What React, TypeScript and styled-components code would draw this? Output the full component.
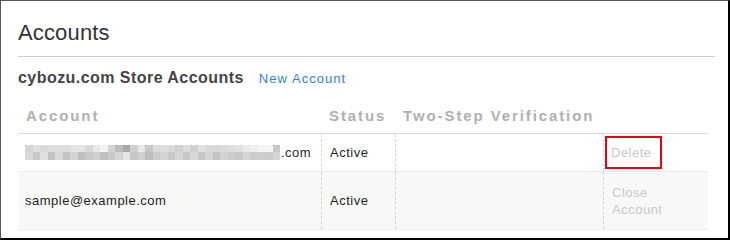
import React from "react";
import styled, { createGlobalStyle } from "styled-components";

const Global = createGlobalStyle`
  html, body { margin: 0; padding: 0; background: #fff; }
  body { font-family: "Liberation Sans", Arial, Helvetica, sans-serif; }
`;

const Frame = styled.div`
  box-sizing: border-box;
  width: 730px;
  height: 240px;
  border-top: 1px solid #555;
  border-left: 1px solid #555;
  border-right: 2px solid #000;
  border-bottom: 2px solid #000;
  padding: 19px 13px 0 17px;
  overflow: hidden;
  background: #fff;
`;

const Title = styled.h1`
  margin: 0;
  font-size: 22px;
  line-height: 26px;
  font-weight: normal;
  letter-spacing: 0.15px;
  color: #333;
`;

const Rule = styled.hr`
  margin: 10px 0 0;
  border: 0;
  height: 1px;
  background: #cfcfcf;
`;

const SectionHead = styled.div`
  display: flex;
  align-items: baseline;
  gap: 15px;
  margin-top: 11px;
`;

const SectionTitle = styled.h2`
  margin: 0;
  font-size: 16px;
  line-height: 20px;
  font-weight: bold;
  letter-spacing: 0.45px;
  color: #444;
`;

const LinkText = styled.a`
  font-size: 13px;
  letter-spacing: 1.05px;
  color: #3083d6;
  text-decoration: none;
`;

const Table = styled.div`
  width: 690px;
  margin-top: 13px;
`;

const Row = styled.div<{ $head?: boolean; $alt?: boolean; $h?: number }>`
  display: grid;
  grid-template-columns: 303px 74px 208px 105px;
  background: ${(p) => (p.$alt ? "#f8f8f6" : "#fff")};
  border-bottom: 1px solid ${(p) => (p.$head ? "#dcdcdc" : "#ebebeb")};
  min-height: ${(p) => p.$h ?? 0}px;
`;

const HeadCell = styled.div`
  padding: 6px 8px 8px;
  font-size: 15px;
  line-height: 18px;
  font-weight: bold;
  letter-spacing: 1.9px;
  color: #b0b0b0;
  white-space: nowrap;
`;

const Cell = styled.div<{ $first?: boolean }>`
  display: flex;
  align-items: center;
  padding: 0 8px 0 ${(p) => (p.$first ? 7 : 8)}px;
  border-left: ${(p) => (p.$first ? "0" : "1px dashed #d6d6d6")};
  font-size: 13px;
  line-height: 17px;
  letter-spacing: 0.5px;
  color: #1e1e1e;
`;

const ActionCell = styled(Cell)`
  padding-right: 30px;
`;

const ActionText = styled.span`
  color: #c8c8c8;
  letter-spacing: 0.5px;
`;

const Highlight = styled.span`
  display: inline-block;
  margin-left: -7px;
  padding: 6px 8px 6px 4px;
  border: 2px solid #e60012;
  color: #c8c8c8;
`;

const Mosaic = styled.div`
  display: grid;
  grid-template-columns: repeat(34, 7.5px);
  grid-template-rows: 7px 8px;
  margin: 0 1px 0 0;
`;

const Pixel = styled.span<{ $g: number }>`
  display: block;
  background: rgb(${(p) => `${p.$g},${p.$g},${p.$g}`});
`;

const top = [212, 224, 216, 221, 221, 221, 228, 228, 216, 232, 242, 212, 189, 168, 208, 232, 200, 220, 221, 216, 208, 221, 208, 224, 216, 216, 218, 221, 226, 236, 240, 244, 246, 200];
const bottom = [216, 200, 224, 196, 216, 196, 212, 192, 200, 208, 192, 200, 212, 228, 200, 208, 189, 204, 212, 200, 214, 200, 216, 200, 212, 196, 210, 204, 200, 212, 204, 206, 204, 214];

const Blurred = () => (
  <Mosaic>
    {top.map((g, i) => (
      <Pixel key={"t" + i} $g={g} />
    ))}
    {bottom.map((g, i) => (
      <Pixel key={"b" + i} $g={g} />
    ))}
  </Mosaic>
);

export default function App() {
  return (
    <>
      <Global />
      <Frame>
        <Title>Accounts</Title>
        <Rule />
        <SectionHead>
          <SectionTitle>cybozu.com Store Accounts</SectionTitle>
          <LinkText href="#">New Account</LinkText>
        </SectionHead>
        <Table>
          <Row $head>
            <HeadCell>Account</HeadCell>
            <HeadCell>Status</HeadCell>
            <HeadCell>Two-Step Verification</HeadCell>
            <HeadCell />
          </Row>
          <Row $h={37}>
            <Cell $first>
              <Blurred />
              .com
            </Cell>
            <Cell>Active</Cell>
            <Cell />
            <ActionCell>
              <Highlight>Delete</Highlight>
            </ActionCell>
          </Row>
          <Row $alt $h={57}>
            <Cell $first>sample@example.com</Cell>
            <Cell>Active</Cell>
            <Cell />
            <ActionCell>
              <ActionText>Close Account</ActionText>
            </ActionCell>
          </Row>
        </Table>
      </Frame>
    </>
  );
}
